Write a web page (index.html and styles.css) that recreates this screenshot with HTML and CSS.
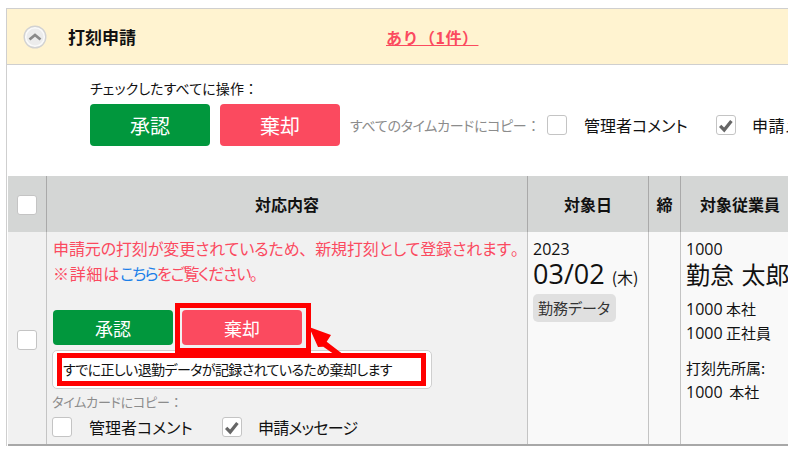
FILE: index.html
```html
<!DOCTYPE html>
<html lang="ja">
<head>
<meta charset="utf-8">
<title>打刻申請</title>
<link rel="stylesheet" href="styles.css">
</head>
<body>
<div class="panel">
  <div class="head">
    <span class="toggle"><svg width="24" height="24" viewBox="0 0 24 24"><circle cx="12" cy="12" r="10.800" fill="#fafafa" stroke="#d2d2d2" stroke-width="1.400"/><circle cx="12" cy="12" r="8.500" fill="#ececec"/><path d="M6.500 14.500 12 10l5.500 4.500" fill="none" stroke="#8a8a8a" stroke-width="2.800"/></svg></span>
    <span class="head-title">打刻申請</span>
    <a class="head-link">あり（1件）</a>
  </div>
  <div class="toolbar">
    <div class="toolbar-label">チェックしたすべてに操作<span class="wide">：</span></div>
    <div class="toolbar-row">
      <button class="btn btn-big btn-green">承認</button>
      <button class="btn btn-big btn-red">棄却</button>
      <span class="copy-label">すべてのタイムカードにコピー<span class="wide">：</span></span>
      <span class="box"></span><span class="opt opt-a">管理者コメント</span>
      <span class="box"><svg class="check" viewBox="0 0 20 20"><path d="M3.500 11l4.500 4.500 8-10" fill="none" stroke="#666" stroke-width="3.600"/></svg></span><span class="opt opt-c">申請メッセージ</span>
    </div>
  </div>
  <table class="grid">
    <thead>
      <tr>
        <th class="c-check"><span class="box"></span></th>
        <th class="c-main">対応内容</th>
        <th class="c-date">対象日</th>
        <th class="c-lock">締</th>
        <th class="c-emp"><span class="th-emp">対象従業員</span></th>
      </tr>
    </thead>
    <tbody>
      <tr>
        <td class="c-check"><span class="box"></span></td>
        <td class="c-main td-main">
          <p class="notice"><span class="line-a">申請元の打刻が変更されているため<span class="wide">、</span>新規打刻として登録されます<span class="wide">。</span></span><br><span class="line-p">※詳細は</span><a class="more">こちら</a><span class="line-b">をご覧ください<span class="wide">。</span></span></p>
          <div class="row-btns">
            <button class="btn btn-small btn-green">承認</button>
            <button class="btn btn-small btn-red">棄却</button>
          </div>
          <div class="reason">すでに正しい退勤データが記録されているため棄却します</div>
          <div class="copy-label copy-small">タイムカードにコピー<span class="wide">：</span></div>
          <div class="row-opts">
            <span class="box"></span><span class="opt opt-b">管理者コメント</span>
            <span class="box"><svg class="check" viewBox="0 0 20 20"><path d="M3.500 11l4.500 4.500 8-10" fill="none" stroke="#666" stroke-width="3.600"/></svg></span><span class="opt opt-d">申請メッセージ</span>
          </div>
          <span class="mark mark-btn"></span>
          <span class="mark mark-reason"></span>
          <svg class="arrow" width="36" height="30" viewBox="0 0 36 30"><path d="M1 1 23 9 18.700 15.700 34 27.500 25 27.500 15.300 20.700 10 21Z" fill="#f00"/></svg>
        </td>
        <td class="c-date td-date">
          <div class="year">2023</div>
          <div class="day">03/02 <small>(木)</small></div>
          <span class="tag">勤務データ</span>
        </td>
        <td class="c-lock td-plain"></td>
        <td class="c-emp td-plain">
          <div class="year">1000</div>
          <div class="emp-name">勤怠 太郎</div>
          <div class="emp-line emp-first"><span class="num">1000</span> 本社</div>
          <div class="emp-line"><span class="num">1000</span> 正社員</div>
          <div class="emp-line emp-gap">打刻先所属:</div>
          <div class="emp-line"><span class="num">1000</span>&nbsp; 本社</div>
        </td>
      </tr>
    </tbody>
  </table>
</div>
</body>
</html>
```
FILE: styles.css
```css
html, body { margin: 0; padding: 0; background: #fff; overflow: hidden; width: 788px; height: 453px; }
body { font-family: "Noto Sans CJK JP", "DejaVu Sans", sans-serif; color: #111; font-feature-settings: "palt"; }
.wide { font-feature-settings: normal; }
.panel { box-sizing: border-box; width: 1000px; height: 438px; margin: 8px 0 0 6px; border: 1px solid #cfcfcf; border-bottom: 0; border-right: 0; }
.head { box-sizing: border-box; height: 56px; background: #fff3d0; border-bottom: 1px solid #cfcfcf; display: flex; align-items: center; padding-left: 16px; }
.toggle { width: 24px; height: 24px; display: block; }
.toggle svg { display: block; }
.head-title { font-size: 17px; font-weight: 700; margin-left: 21px; width: 318px; flex: none; }
.head-link { font-size: 16px; font-weight: 700; color: #fb4a5f; text-decoration: underline; font-feature-settings: normal; letter-spacing: 0.5px; }
.toolbar { box-sizing: border-box; height: 111px; padding: 13px 0 0 83px; }
.toolbar-label { font-size: 14px; line-height: 20px; height: 26px; letter-spacing: 0.1px; }
.toolbar-row { display: flex; align-items: center; }
.btn { border: 0; border-radius: 4px; color: #fff; font-family: inherit; font-feature-settings: normal; padding: 0; display: block; }
.btn-green { background: #01973d; }
.btn-red { background: #fb4a5f; }
.btn-big { width: 120px; height: 42px; font-size: 20px; margin-right: 10px; flex: none; }
.btn-small { width: 120px; height: 35px; font-size: 18px; }
.copy-label { color: #8c8c8c; font-size: 14px; letter-spacing: -0.3px; white-space: nowrap; }
.toolbar-row .copy-label { width: 197px; flex: none; }
.box { box-sizing: border-box; display: block; width: 20px; height: 20px; background: #fff; border: 1px solid #c4c4c4; border-radius: 3px; flex: none; }
.check { display: block; width: 18px; height: 18px; }
.opt { font-size: 16px; margin-left: 17px; white-space: nowrap; }
.opt-a { width: 132px; flex: none; }
.opt-b { width: 133px; flex: none; }
.opt-c { letter-spacing: 0.6px; margin-left: 16px; }
.opt-d { letter-spacing: -0.8px; margin-left: 16px; }
.grid { border-collapse: collapse; table-layout: fixed; width: 993px; margin-left: 1px; border-bottom: 2px solid #a8a8a8; }
.grid th { background: #d4d6d5; height: 56px; padding: 0; font-size: 16px; font-weight: 700; border-right: 1px solid #a9a9a9; font-feature-settings: normal; }
.grid td { height: 212px; padding: 0; vertical-align: top; border-right: 1px solid #c4c4c4; }
.c-check { width: 38px; }
.c-main { width: 480px; }
.c-date { width: 120px; }
.c-lock { width: 31px; }
.c-emp { width: 320px; text-align: left; }
.th-emp { margin-left: 19px; white-space: nowrap; }
td.c-check { background: #f1f1f1; vertical-align: middle; }
.c-check .box { margin-left: 9px; }
th.c-check .box { margin-top: 1px; }
td.c-check .box { margin-top: 4px; }
.td-main { background: #f1f1f1; position: relative; }
.notice { margin: 0; padding: 4px 0 0 6px; font-size: 16px; line-height: 25px; color: #fb4a5f; white-space: nowrap; }
.line-a { letter-spacing: -0.12px; }
.line-p { letter-spacing: 0.75px; }
.line-b { letter-spacing: -1.2px; }
.more { color: #1a7fe8; letter-spacing: -1.6px; }
.row-btns { display: flex; gap: 9px; margin: 24px 0 0 6px; }
.reason { box-sizing: border-box; width: 380px; height: 39px; margin: 5px 0 0 5px; border: 1px solid #cfcfcf; border-radius: 5px; background: #fff; font-size: 14px; line-height: 37px; padding-left: 10px; white-space: nowrap; letter-spacing: -0.6px; }
.copy-small { margin: 3px 0 0 5px; line-height: 20px; font-size: 13px; letter-spacing: -0.2px; }
.row-opts { display: flex; align-items: center; margin: 3px 0 0 5px; }
.mark { position: absolute; box-sizing: border-box; border: 5px solid #f00; }
.mark-btn { left: 128px; top: 71px; width: 136px; height: 50px; }
.mark-reason { left: 10px; top: 121px; width: 369px; height: 33px; }
.arrow { position: absolute; left: 261px; top: 94px; }
.td-date { background: #f9f9f9; padding-left: 5px !important; }
.year { font-size: 16px; line-height: 18px; margin-top: 8px; font-family: "Open Sans", sans-serif; }
.day { font-size: 27px; line-height: 32px; white-space: nowrap; font-family: "Open Sans", "Noto Sans CJK JP", sans-serif; }
.day small { font-size: 16px; font-family: "Noto Sans CJK JP", sans-serif; font-feature-settings: normal; }
.tag { display: block; width: fit-content; margin-top: 1px; background: #e0e0e0; border-radius: 5px; padding: 0 6px 0 5px; font-size: 15px; line-height: 28px; color: #333; white-space: nowrap; }
.td-plain { background: #f9f9f9; }
.c-emp.td-plain { padding-left: 5px !important; }
.emp-name { font-size: 24px; line-height: 32px; white-space: nowrap; font-feature-settings: normal; word-spacing: 2px; }
.emp-line { font-size: 15px; line-height: 24px; white-space: nowrap; }
.num { font-family: "Open Sans", sans-serif; font-size: 16px; }
.emp-first { margin-top: 7px; }
.emp-gap { margin-top: 11px; }
```
